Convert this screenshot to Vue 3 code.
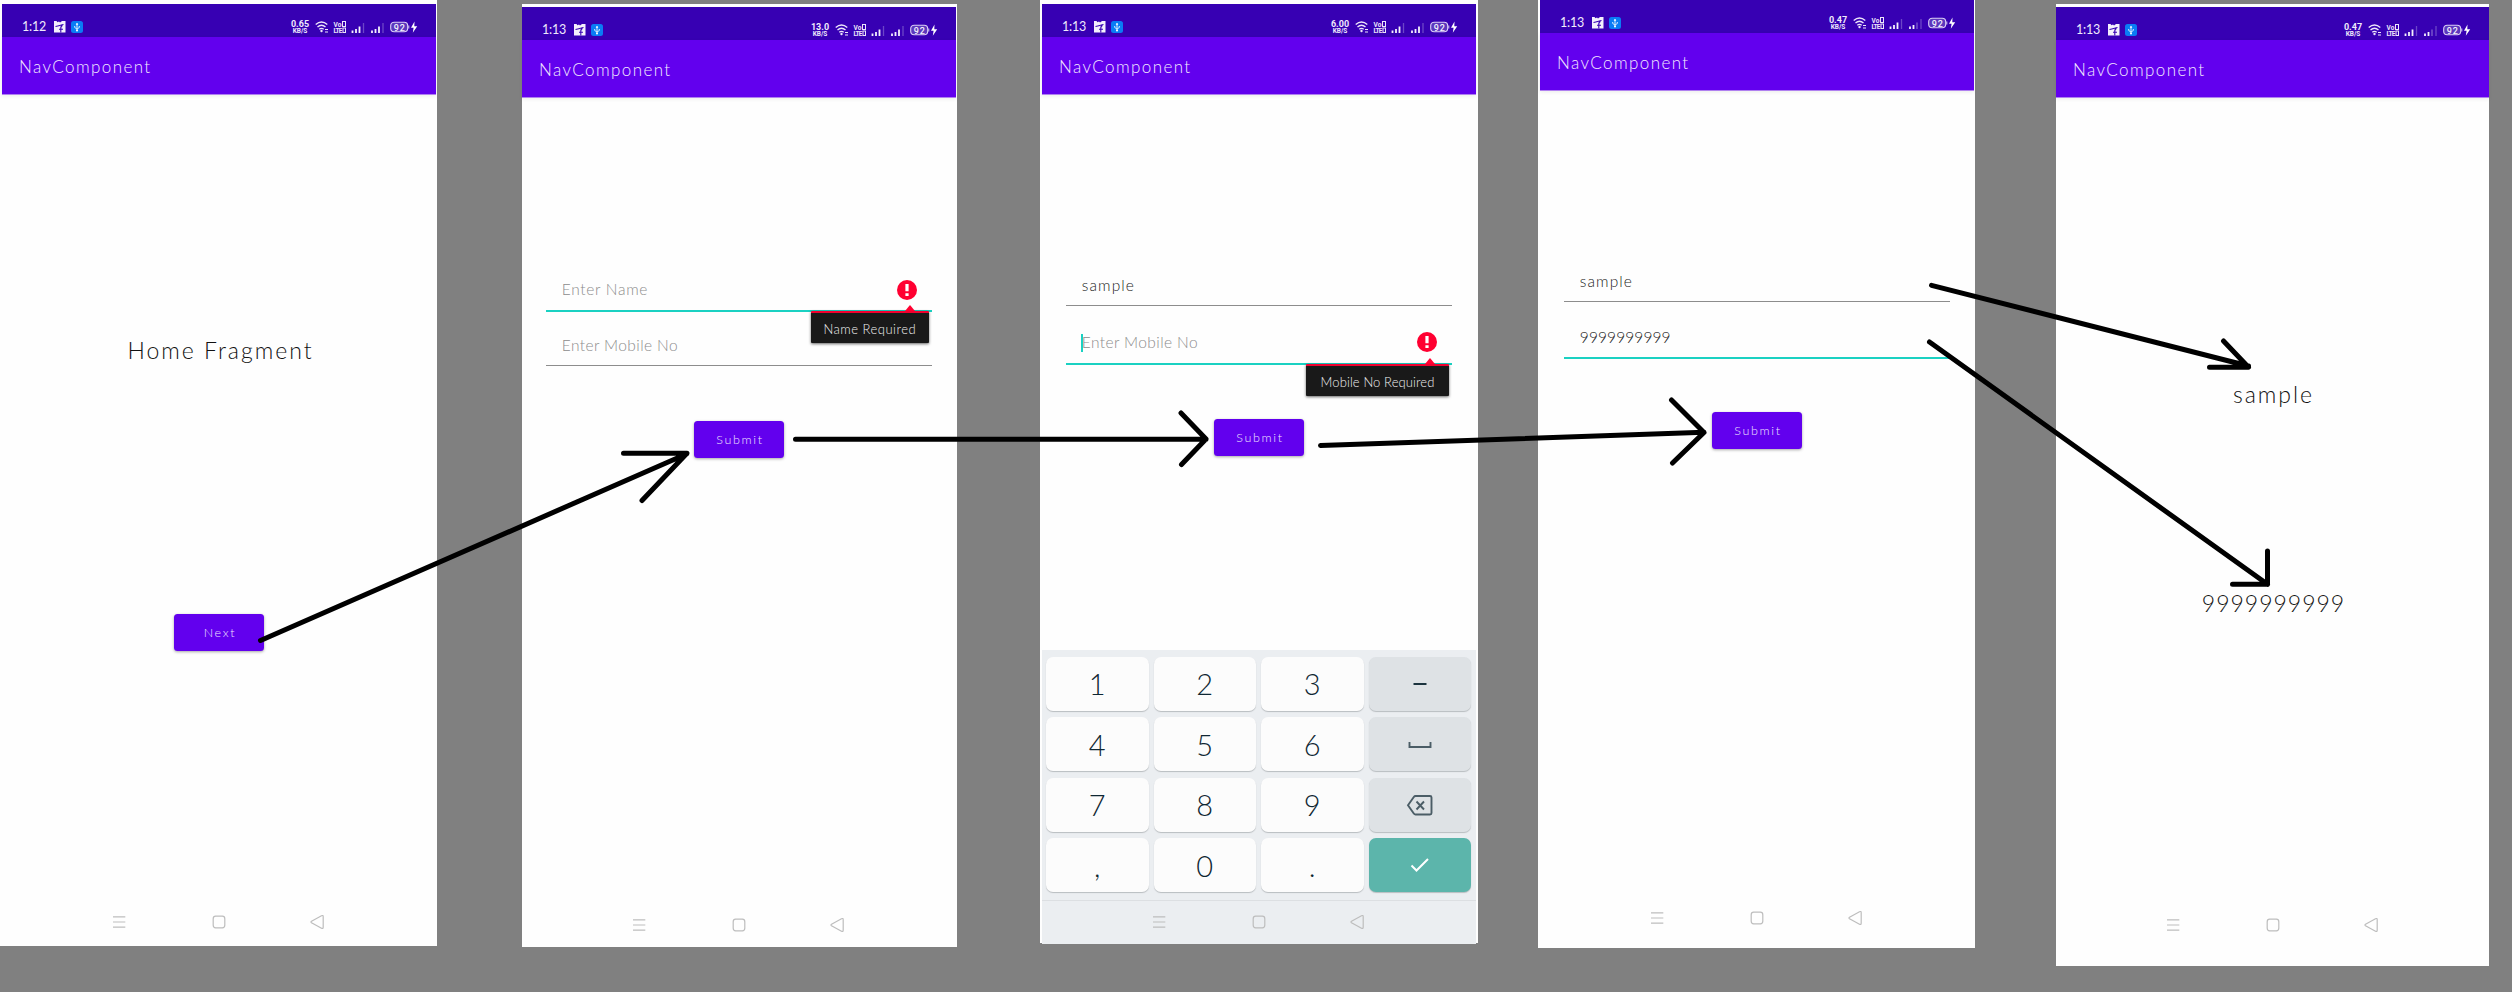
<script setup>
const phones = [
  { id: 'home', time: '1:12', speed: '0.65' },
  { id: 'nameError', time: '1:13', speed: '13.0' },
  { id: 'mobileError', time: '1:13', speed: '6.00' },
  { id: 'filled', time: '1:13', speed: '0.47' },
  { id: 'result', time: '1:13', speed: '0.47' },
]

const forms = {
  nameError: [
    { text: 'Enter Name', hint: true, focused: true, error: 'Name Required', cls: 'f-name' },
    { text: 'Enter Mobile No', hint: true, cls: 'f-mobile' },
  ],
  mobileError: [
    { text: 'sample', cls: 'f-sample' },
    { text: 'Enter Mobile No', hint: true, focused: true, cursor: true, error: 'Mobile No Required', cls: 'f-mobile' },
  ],
  filled: [
    { text: 'sample', cls: 'f-sample' },
    { text: '9999999999', focused: true, cls: 'f-digits' },
  ],
}

const keys = ['1', '2', '3', 'dash', '4', '5', '6', 'space', '7', '8', '9', 'del', ',', '0', '.', 'ok']
const actionKeys = ['dash', 'space', 'del', 'ok']
</script>

<template>
  <main class="board">
    <section v-for="p in phones" :key="p.id" class="phone" :class="p.id">
      <header class="status">
        <span class="time">{{ p.time }}</span>
        <svg class="apps" width="29" height="12" viewBox="0 0 29 12">
          <path d="M0 0H2.5L3.5 1.2L5 .4L6 1.4L8 0H11.5V11.5H0Z" fill="#f4f0fc" />
          <path d="M1.5 5.5C5 5 7 4 9.500 3.500M8.500 4.500Q6.500 5 6.800 8V11.500M5 8.200H9" fill="none" stroke="#3700b3" stroke-width="1.100" />
          <rect x="17" width="12" height="12" rx="2.500" fill="#0a7cf5" />
          <path d="M23 2.200V10M20.700 5V6.500L23 8L25.300 6.500V5" fill="none" stroke="#d8ecff" stroke-width="1" />
          <path d="M21.700 3.700L23 1.800L24.300 3.700Z" fill="#fff" />
          <circle cx="23" cy="9.500" r="1" fill="#fff" />
        </svg>
        <span class="speed"><b>{{ p.speed }}</b><i>KB/S</i></span>
        <svg class="signals" width="104" height="14" viewBox="0 0 104 14">
          <g fill="none" stroke="#ece5fa" stroke-width="1.400">
            <path d="M.7 4.500Q6.500 -.5 12.300 4.500M2.500 7Q6.500 3.600 10.500 7M4.300 9.200Q6.500 7.500 8.700 9.200" />
          </g>
          <circle cx="6.500" cy="11" r="1.200" fill="#ece5fa" />
          <path d="M10 9.500H13M10 12H13" stroke="#ece5fa" stroke-width="1.200" />
          <g class="volte">
            <text x="18.500" y="7" textLength="8">Vo</text>
            <text x="18.500" y="13" textLength="9">LTE</text>
          </g>
          <rect x="27.500" y="1.500" width="3" height="5" fill="none" stroke="#ece5fa" />
          <rect x="28" y="8" width="2.500" height="4.500" fill="none" stroke="#ece5fa" />
          <path d="M37.500 13V10.500M41 13V9M44.500 13V6.500M57 13V10.500M60.500 13V9" stroke="#f4f0fc" stroke-width="1.800" />
          <path d="M64 13V6.500" :stroke="p.speed === '0.47' ? '#6c45c7' : '#f4f0fc'" stroke-width="1.800" />
          <path d="M48.500 13V3M68 13V3" stroke="#6c45c7" stroke-width="1.300" />
          <rect x="75.700" y="2.200" width="17" height="9.600" rx="3.500" fill="#5c37bd" stroke="#dcd0f5" stroke-width="1.100" />
          <text class="bat" x="78.800" y="10.600" textLength="11">92</text>
          <path d="M93.800 5.500V8.500" stroke="#dcd0f5" />
          <path d="M99.500 1.500L96 7.800H98.600L97.800 12.700L102.200 6.200H99.300Z" fill="#fff" />
        </svg>
      </header>
      <div class="appbar"><span>NavComponent</span></div>

      <div class="content">
        <template v-if="p.id === 'home'">
          <h1 class="headline">Home Fragment</h1>
          <button class="btn next"><span>Next</span></button>
        </template>

        <template v-else-if="forms[p.id]">
          <div v-for="(f, i) in forms[p.id]" :key="i" class="field" :class="['row' + i, { focused: f.focused }]">
            <span class="value" :class="[f.cls, { hint: f.hint }]">{{ f.text }}</span>
            <i v-if="f.cursor" class="cursor"></i>
            <svg v-if="f.error" class="err" width="20" height="20" viewBox="0 0 20 20">
              <circle cx="10" cy="10" r="10" fill="#ff0031" />
              <path d="M10 4V11.200M10 13.200V16" stroke="#fff" stroke-width="3.200" />
            </svg>
            <div v-if="f.error" class="popup" :class="'pop' + i"><span>{{ f.error }}</span></div>
          </div>
          <button class="btn"><span>Submit</span></button>
        </template>

        <template v-else>
          <p class="out name"><span>sample</span></p>
          <p class="out number"><span>9999999999</span></p>
        </template>

        <div v-if="p.id === 'mobileError'" class="keyboard">
          <div v-for="k in keys" :key="k" class="key" :class="{ action: actionKeys.includes(k), ok: k === 'ok' }">
            <svg v-if="actionKeys.includes(k)" width="28" height="24" viewBox="0 0 28 24" fill="none" stroke="#4b5d66" stroke-width="1.900">
              <path v-if="k === 'dash'" d="M7.500 12H20.500" stroke="#102a35" />
              <path v-else-if="k === 'space'" d="M3.500 10V15H24.500V10" />
              <path v-else-if="k === 'del'" d="M9.500 3H24Q25.500 3 25.500 4.500V20Q25.500 21.500 24 21.500H9.500Q8.500 21.500 7.800 20.500L2 12.200L7.800 4Q8.500 3 9.500 3ZM10.500 8.500L18 16.500M18 8.500L10.500 16.500" />
              <path v-else d="M5.500 12.500L10.500 17.500L22 6" stroke="#fff" stroke-width="2" />
            </svg>
            <span v-else>{{ k }}</span>
          </div>
        </div>
      </div>

      <nav class="nav">
        <svg width="433" height="44" viewBox="0 0 433 44" fill="none" stroke="#bdbdbd" stroke-width="1.200">
          <path d="M111 16.800H123.300M111 22H123.300M111 27.200H123.300" />
          <rect x="211.200" y="16.200" width="11.600" height="11.600" rx="2.500" />
          <path d="M309.500 21.200L319.500 15.700Q321.200 15 321.200 16.700V27.300Q321.200 29 319.500 28.200L309.500 22.800Q308.500 22 309.500 21.200Z" />
        </svg>
      </nav>
    </section>

    <svg class="arrows" width="2512" height="992" viewBox="0 0 2512 992">
      <path d="M260.500 640.500L686.500 454M623.500 453.300H687L642 500.500" />
      <path d="M795.500 439.300H1206M1181 413L1206 439L1181.500 464.500" />
      <path d="M1320.500 445.500L1704 432.300M1671.500 400L1704 432.500L1672.500 463" />
      <path d="M1931.500 285.300L2248.500 366M2223.500 341L2248.500 367.300H2209.500" />
      <path d="M1929.500 342L2267.500 584.300M2267.500 551V584.300H2232.500" />
    </svg>
  </main>
</template>

<style>
body {
  margin: 0;
  background: #808080;
}
</style>

<style scoped>
.board {
  position: relative;
  display: flex;
  align-items: flex-start;
  width: 2512px;
  height: 992px;
  overflow: hidden;
  background: #808080;
  font-family: Lato, "Open Sans", sans-serif;
  font-weight: 300;
}
.phone {
  box-sizing: border-box;
  flex: none;
  display: flex;
  flex-direction: column;
  background: #fefefe;
}
.home { width: 437px; height: 946px; padding: 4px 1px 0 2px; }
.nameError { width: 435px; height: 943px; margin: 4px 0 0 85px; padding: 3px 1px 0 0; }
.mobileError { width: 438px; height: 943px; margin-left: 83px; padding: 4px 2px 0; }
.filled { width: 437px; height: 948px; margin-left: 60px; padding: 0 1px 0 2px; }
.result { width: 433px; height: 962px; margin: 4px 0 0 81px; padding-top: 3px; }

.status {
  box-sizing: border-box;
  flex: none;
  display: flex;
  align-items: center;
  height: 33px;
  padding: 13px 17px 0 20px;
  background: #3700b3;
  color: #f0eafc;
}
.time {
  width: 32px;
  font-size: 12.500px;
  font-weight: 400;
  line-height: 14px;
  letter-spacing: -.2px;
  white-space: nowrap;
}
.speed {
  display: flex;
  flex-direction: column;
  align-items: center;
  width: 20px;
  margin-left: auto;
  margin-right: 5px;
  font-family: Roboto, sans-serif;
}
.speed b { font-size: 9px; font-weight: 700; line-height: 8px; }
.speed i { font-size: 6.500px; font-weight: 700; font-style: normal; line-height: 6px; }
.volte { font: 700 6.500px Roboto, sans-serif; fill: #ece5fa; }
.bat { font: 500 9px Roboto, sans-serif; fill: #f4f0fc; }

.appbar {
  flex: none;
  box-sizing: border-box;
  height: 57.500px;
  padding-left: 17px;
  background: #6200ee;
  border-bottom: 1px solid #b080f0;
  box-shadow: 0 1px 4px rgba(0, 0, 0, .08);
  color: #f4eaff;
  font-size: 17px;
  line-height: 59.500px;
  letter-spacing: 1.400px;
}
.content {
  flex: none;
  display: flex;
  flex-direction: column;
  height: 805px;
}
.headline {
  margin: 240px 0 0;
  padding-left: 3px;
  height: 30px;
  color: #111;
  font-size: 23px;
  font-weight: 300;
  line-height: 30px;
  letter-spacing: 2px;
  text-align: center;
  white-space: nowrap;
}
.btn {
  width: 90px;
  height: 37px;
  flex: none;
  margin: 53.500px 0 0 172px;
  padding: 0 0 0 2px;
  border: 0;
  border-radius: 3.500px;
  background: #6200ee;
  box-shadow: 0 1px 3px rgba(0, 0, 0, .35);
  color: #f0e4ff;
  font: 300 12.500px Lato, sans-serif;
  letter-spacing: 1.700px;
}
.btn.next { margin-top: 249px; }
.nameError .btn { margin-top: 54.500px; }
.mobileError .btn { margin-top: 54px; }

.field {
  box-sizing: border-box;
  position: relative;
  flex: none;
  width: 385.500px;
  margin-left: 24.300px;
  padding-left: 15.500px;
  border-bottom: 1.500px solid #8d8d8d;
  color: #1c1c1c;
}
.field.focused { border-bottom: 2px solid #1ad1c2; }
.row0 { height: 211px; padding-top: 180.500px; }
.nameError .row0 { height: 214.500px; padding-top: 181.500px; }
.row1 { height: 57px; padding-top: 25.500px; }
.nameError .row1 { height: 54px; padding-top: 23px; }
.mobileError .row1 { height: 59px; padding-top: 26px; }
.value {
  display: block;
  font-size: 15.500px;
  line-height: 20px;
  white-space: nowrap;
}
.hint { color: #8c8c8c; }
.f-name { letter-spacing: .700px; }
.f-mobile { letter-spacing: .4px; }
.f-sample { letter-spacing: 1.100px; }
.f-digits { letter-spacing: .1px; }
.cursor {
  position: absolute;
  left: 14.500px;
  bottom: 11px;
  width: 2px;
  height: 18px;
  background: #1ad1c2;
}
.err {
  position: absolute;
  right: 15px;
  bottom: 10.500px;
}
.popup {
  position: absolute;
  z-index: 1;
  top: calc(100% + 1px);
  right: 3px;
  box-sizing: border-box;
  height: 32px;
  border-top: 2.500px solid #f0002e;
  border-radius: 1px;
  background: #191919;
  box-shadow: 0 1px 3px rgba(0, 0, 0, .6);
  color: #f0f0f0;
  font-size: 13px;
  line-height: 32px;
  text-align: center;
  white-space: nowrap;
}
.popup::before {
  content: "";
  position: absolute;
  right: 14px;
  top: -8px;
  border: 5.500px solid transparent;
  border-top: 0;
  border-bottom: 6px solid #ff0031;
}
.pop0 { width: 118px; letter-spacing: .5px; }
.pop1 { width: 142.500px; letter-spacing: .1px; }

.out {
  margin: 0;
  padding-left: 2px;
  color: #111;
  font-size: 23px;
  line-height: 30px;
  text-align: center;
}
.out.name { margin-top: 281px; letter-spacing: 2px; }
.out.number { margin-top: 179.500px; letter-spacing: 1px; }

.keyboard {
  box-sizing: border-box;
  display: grid;
  grid-template-columns: repeat(4, 102.500px);
  grid-auto-rows: 54px;
  gap: 6.500px 5px;
  height: 249.500px;
  margin-top: auto;
  padding: 6.500px 4px 0;
  background: #ebeef1;
}
.key {
  display: flex;
  align-items: center;
  justify-content: center;
  border-radius: 7px;
  background: #fcfcfc;
  box-shadow: 0 1px 1px #b9bdc0;
  color: #0f2733;
  font-size: 29px;
}
.key.action { background: #dee2e5; }
.key.ok { background: #5cb5ab; }

.nav { flex: none; height: 44px; }
.nav svg { display: block; }
.mobileError .nav {
  box-sizing: border-box;
  background: #ebeef1;
  box-shadow: inset 0 1px #dcdfe2;
}
.arrows {
  position: absolute;
  inset: 0;
  fill: none;
  stroke: #000;
  stroke-width: 5;
  stroke-linecap: round;
  stroke-linejoin: round;
}
</style>
